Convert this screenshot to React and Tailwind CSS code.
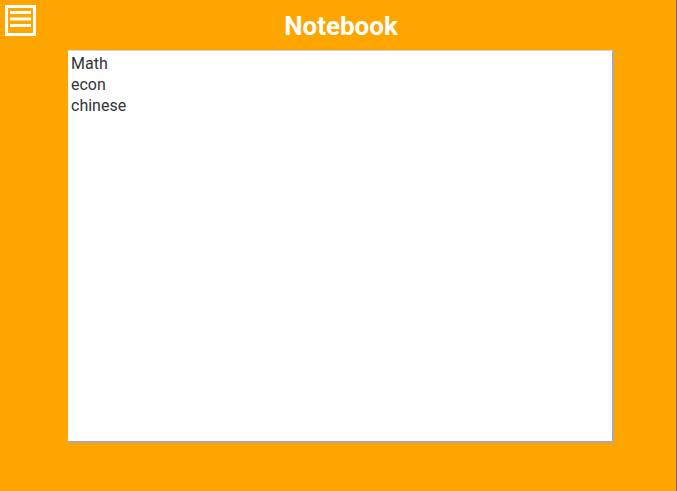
import React from "react";

const MenuIcon = () => (
  <svg width="31" height="31" viewBox="0 0 31 31" className="block">
    <rect x="1.5" y="1.5" width="28" height="28" fill="none" stroke="#ffffff" strokeWidth="3" />
    <rect x="5" y="6" width="21" height="3" fill="#ffffff" />
    <rect x="5" y="12.5" width="21" height="3" fill="#ffffff" />
    <rect x="5" y="19" width="21" height="3" fill="#ffffff" />
  </svg>
);

export default function App() {
  const notes = "Math\necon\nchinese";

  return (
    <div className="flex w-[677px] h-[491px] overflow-hidden">
      <div className="relative flex-1 bg-[#ffa500] font-['Roboto',sans-serif]">
        {/* Menu button */}
        <button className="absolute left-[5px] top-[5px] p-0">
          <MenuIcon />
        </button>

        {/* Header */}
        <h1 className="pl-[6px] pt-[9px] h-[50px] text-center text-[26px] font-bold leading-[34px] text-white">
          Notebook
        </h1>

        {/* Notes area */}
        <div className="ml-[68px] w-[546px]">
          <textarea
            readOnly
            defaultValue={notes}
            className="block w-full h-[393px] resize-none bg-white px-[3px] pt-[2px] pb-[3px] text-[16px] leading-[21px] text-[#333333] font-['Roboto',sans-serif] border-t border-t-[#d6d6d6] border-r-2 border-b-2 border-r-[#a9a9a9] border-b-[#a9a9a9] outline-none"
          />
        </div>
      </div>
      <div className="w-[1px] bg-[#a4506a]" />
    </div>
  );
}
